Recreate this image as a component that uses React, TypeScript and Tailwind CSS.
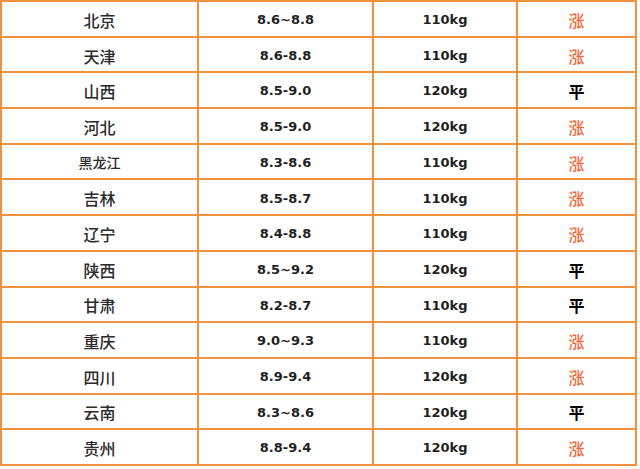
import React from 'react';

const ROWS = [
  { name: '北京', price: '8.6~8.8', weight: '110kg', trend: '涨' },
  { name: '天津', price: '8.6-8.8', weight: '110kg', trend: '涨' },
  { name: '山西', price: '8.5-9.0', weight: '120kg', trend: '平' },
  { name: '河北', price: '8.5-9.0', weight: '120kg', trend: '涨' },
  { name: '黑龙江', price: '8.3-8.6', weight: '110kg', trend: '涨', small: true },
  { name: '吉林', price: '8.5-8.7', weight: '110kg', trend: '涨' },
  { name: '辽宁', price: '8.4-8.8', weight: '110kg', trend: '涨' },
  { name: '陕西', price: '8.5~9.2', weight: '120kg', trend: '平' },
  { name: '甘肃', price: '8.2-8.7', weight: '110kg', trend: '平' },
  { name: '重庆', price: '9.0~9.3', weight: '110kg', trend: '涨' },
  { name: '四川', price: '8.9-9.4', weight: '120kg', trend: '涨' },
  { name: '云南', price: '8.3~8.6', weight: '120kg', trend: '平' },
  { name: '贵州', price: '8.8-9.4', weight: '120kg', trend: '涨' },
];

const cell = 'flex items-center justify-center pt-[2px] border-r-2 border-[#f0913f]';
const cjk = "font-['Noto_Sans_CJK_SC',sans-serif]";
const num = "font-['DejaVu_Sans','Noto_Sans_CJK_SC',sans-serif] text-[13px] font-bold text-[#1f1f1f]";

export default function App() {
  return (
    <div className="w-[640px] h-[469px] bg-white overflow-hidden">
      {/* price table */}
      <div className="w-[637px] border-l-2 border-t-2 border-[#f0913f]">
        {ROWS.map((row) => (
          <div
            key={row.name}
            className="grid grid-cols-[197px_175px_144px_119px] h-[35.7px] border-b-2 border-[#f0913f]"
          >
            <div
              className={`${cell} ${cjk} font-medium text-[#2b2b2b] ${
                row.small ? 'text-[14px]' : 'text-[16px]'
              }`}
            >
              {row.name}
            </div>
            <div className={`${cell} ${num}`}>{row.price}</div>
            <div className={`${cell} ${num}`}>{row.weight}</div>
            <div
              className={`${cell} ${cjk} text-[16px] ${
                row.trend === '涨' ? 'font-medium text-[#f0673a]' : 'font-bold text-black'
              }`}
            >
              {row.trend}
            </div>
          </div>
        ))}
      </div>
    </div>
  );
}
